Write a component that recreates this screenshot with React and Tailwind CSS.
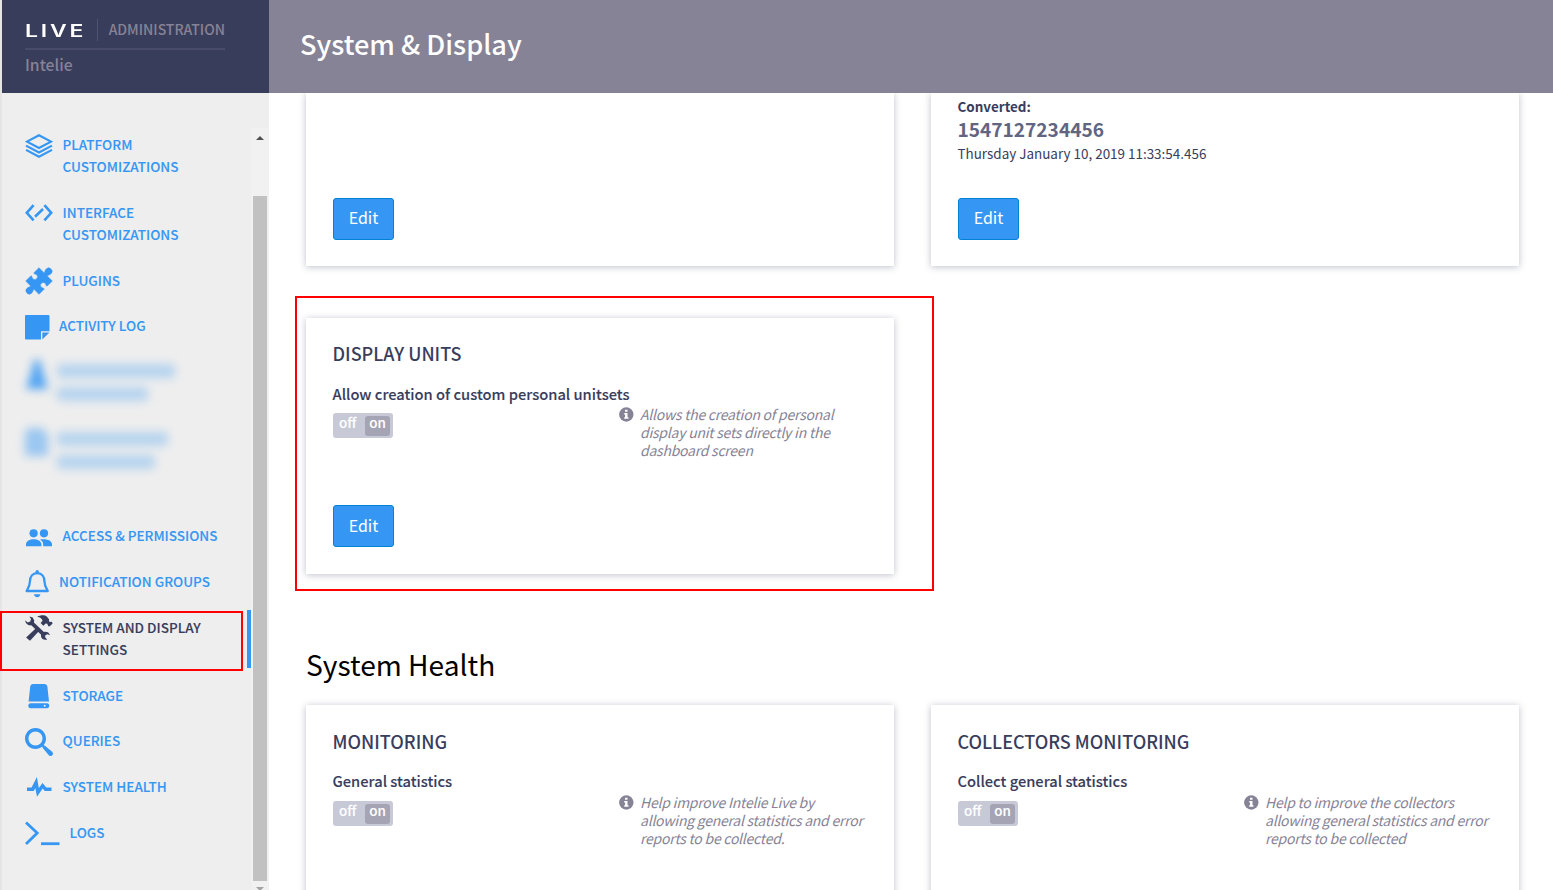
import { ImSearch } from "react-icons/im";

function LayersIcon() {
  return (
    <svg width="28" height="24" viewBox="0 0 28 24" fill="none" stroke="currentColor" strokeWidth="2.2">
      <path d="M14 1.200 26 7.600 14 14 2 7.600Z" />
      <path d="M1 11.600 14 18.400 27 11.600" />
      <path d="M1 15.900 14 22.700 27 15.900" />
    </svg>
  );
}

function CodeIcon() {
  return (
    <svg width="28" height="18" viewBox="0 0 28 18" fill="none" stroke="currentColor" strokeWidth="2.6">
      <path d="M8.600 1.200 1.800 8.800 8.600 16.400M19.400 1.200 26.200 8.800 19.400 16.400M18 5 10 12.800" />
    </svg>
  );
}

function PuzzleIcon() {
  return (
    <svg width="28" height="28" viewBox="0 0 28 28" fill="currentColor">
      <g transform="translate(14 14) rotate(45)">
        <path d="M-9.400-9.400H-2.400C-1.900-10.400-3.400-11.600-3.400-13.600A3.400 3.400 0 0 1 3.400-13.600C3.400-11.600 1.900-10.400 2.400-9.400H9.400V-1.900C8.600-1.300 7.500-2.700 6-2.700A2.700 2.700 0 0 0 6 2.700C7.500 2.700 8.600 1.300 9.400 1.900V9.400H2.400C1.900 10.400 3.400 11.600 3.400 13.600A3.400 3.400 0 0 1-3.400 13.600C-3.400 11.600-1.900 10.400-2.400 9.400H-9.400V1.900C-8.600 1.300-7.500 2.700-6 2.700A2.700 2.700 0 0 0-6-2.700C-7.500-2.700-8.600-1.300-9.400-1.900Z" stroke="currentColor" strokeWidth=".5" />
      </g>
    </svg>
  );
}

function NoteIcon() {
  return (
    <svg width="25" height="25" viewBox="0 0 25 25" fill="currentColor">
      <path d="M1 0H23.500A1 1 0 0 1 24.500 1V16.200H16V24.500H1A1 1 0 0 1 0 23.500V1A1 1 0 0 1 1 0ZM17.300 17.600H24.500L17.300 24.500Z" />
    </svg>
  );
}

function PeopleIcon() {
  return (
    <svg width="28" height="18" viewBox="0 0 28 18" fill="currentColor">
      <circle cx="8.600" cy="4.300" r="4.100" />
      <circle cx="19" cy="4.300" r="4.100" />
      <path d="M1 17.200V15.500C1 12 5 10.200 8.700 10.200S16.400 12 16.400 15.500V17.200ZM15 10.600C16 10.300 17.500 10.100 19 10.200C23 10.300 27 12 27 15.500V17.200H18.200V15.500C18.200 13.300 16.800 11.700 15 10.600Z" />
    </svg>
  );
}

function BellIcon() {
  return (
    <svg width="25" height="28" viewBox="0 0 25 28" fill="none" stroke="currentColor" strokeWidth="2.3">
      <path d="M12.200 3.100C7.500 3.100 5.100 6.600 5 11C4.900 16.200 3.500 18 1.600 21H22.800C20.900 18 19.500 16.200 19.400 11C19.300 6.600 16.900 3.100 12.200 3.100Z" strokeLinejoin="round" />
      <path d="M10.500 3V1.700A1.700 1.700 0 0 1 13.900 1.700V3ZM8.900 24.200H15.500C15 26.200 13.800 27.200 12.200 27.200S9.400 26.200 8.900 24.200Z" fill="currentColor" stroke="none" />
    </svg>
  );
}

function ToolsIcon() {
  return (
    <svg width="28" height="26" viewBox="0 0 28 26" fill="currentColor">
      <path d="M12.200 1.800C15.500-.2 19.800-.2 21.800 1.600L24 4.200V6.200L25 6.900 26.800 6.700 27.600 8.500 24.800 11.300 23.200 11.200 22.300 8.800L20.700 8.600L18.300 10.800L15.600 8L17.600 5.700C17 3.500 15 2.200 12.200 1.800Z" />
      <path d="M12.500 11.800 15.200 14.700 5 25.700 1.100 22.600Z" />
      <path d="M4.400 1.400 7.700 2.400 9.200 5.600 8.900 7.600 18.900 17C21.500 16.300 24.200 17.400 24.900 20.200L22.400 19.300 20.400 20.300 20.100 22.300 22.200 24.500C19.300 25.400 16.400 24 16 21.500L16.100 19.800 6.300 10.300C3.300 10.800.5 9 .1 5.200L2.700 7.400 5.300 6.500 6 4Z" />
    </svg>
  );
}

function StorageIcon() {
  return (
    <svg width="22" height="25" viewBox="0 0 22 25" fill="currentColor">
      <path d="M5.200 0H16.200C18 0 19.200 1.100 19.400 2.700L21 17.600H.6L2.200 2.700C2.400 1.100 3.500 0 5.200 0Z" />
      <path fillRule="evenodd" d="M2.500 19.200H19C22 19.200 22 24.200 19 24.200H2.500C-.4 24.200-.4 19.200 2.500 19.200ZM16.700 20.700A1 1 0 1 0 16.700 22.700A1 1 0 1 0 16.700 20.700Z" />
    </svg>
  );
}

function PulseIcon() {
  return (
    <svg width="26" height="20" viewBox="0 0 26 20" fill="currentColor">
      <path d="M0 10.500H4.600L9.900 0L11.800 11L15.500 6L19.300 10.500H24.500V13.900H17.800L15.700 11.600L10 19.800L8.300 11L6.800 13.900H0Z" />
    </svg>
  );
}

function PromptIcon() {
  return (
    <svg width="35" height="25" viewBox="0 0 35 25" fill="none" stroke="currentColor">
      <path d="M1 1.500 12.200 12 1 23" strokeWidth="2.800" />
      <path d="M16 22.700H34.500" strokeWidth="2.800" />
    </svg>
  );
}

function InfoIcon() {
  return (
    <svg width="15" height="15" viewBox="0 0 15 15">
      <circle cx="7.300" cy="7.500" r="7.200" fill="#868396" />
      <path d="M6 2.700H8.500V4.800H6ZM5.200 6H8.500V10.200H9.500V11.700H5.200V10.200H6.100V7.500H5.200Z" fill="#fff" />
    </svg>
  );
}

function NavItem({ icon, iconPad, height, textPad, active, children }) {
  return (
    <a className={`flex shrink-0 items-start ${height} ${active ? "text-[#393d5c]" : "text-[#3597f3]"}`}>
      <span className={`flex shrink-0 ${textPad || "w-[37.6px]"} ${iconPad}`}>{icon}</span>
      <span className="-mt-px text-[13.5px] leading-[22px] font-medium whitespace-nowrap [-webkit-text-stroke:0.1px]">{children}</span>
    </a>
  );
}

function BlurredItem({ icon, height, first, second }) {
  return (
    <div className={`flex shrink-0 items-start gap-[8px] ${height}`} aria-hidden="true">
      <div className="w-6 blur-[5px]">{icon}</div>
      <div className="flex flex-col gap-[9px] pt-1 blur-[5px]">
        <div className={`h-[14px] rounded-sm bg-[#3597f3]/30 ${first}`} />
        <div className={`h-[14px] rounded-sm bg-[#3597f3]/30 ${second}`} />
      </div>
    </div>
  );
}

function Sidebar() {
  return (
    <aside className="flex h-full w-[269px] shrink-0 flex-col border-l-2 border-[#e5e5e5] bg-[#eeeeee]">
      <div className="h-[93px] shrink-0 bg-[#393d5c] pt-[19px] pl-[23px] text-[#868396]">
        <div className="flex h-[31px] w-[200px] items-start border-b-2 border-[#484b69]">
          <div className="flex h-[22px] w-[73px] items-center border-r border-[#50536f] pt-[2px]">
            <span className="origin-left scale-x-[1.35] font-['Inter'] text-[17px] leading-none font-semibold tracking-[2.1px] text-white">LIVE</span>
          </div>
          <span className="pl-[11px] text-[14px] leading-[21px] font-medium">ADMINISTRATION</span>
        </div>
        <div className="pt-1 text-[15.7px] leading-[22px] font-medium">Intelie</div>
      </div>
      <div className="flex min-h-0 grow pt-[35px]">
        <nav className="relative flex w-[249px] shrink-0 flex-col overflow-hidden pt-[6px] pl-[23px]">
          <NavItem icon={<LayersIcon />} iconPad="" height="h-[68px]">PLATFORM<br />CUSTOMIZATIONS</NavItem>
          <NavItem icon={<CodeIcon />} iconPad="pt-[2px]" height="h-[68px]">INTERFACE<br />CUSTOMIZATIONS</NavItem>
          <NavItem icon={<PuzzleIcon />} iconPad="-mt-[3px]" height="h-[45px]">PLUGINS</NavItem>
          <NavItem icon={<NoteIcon />} iconPad="" textPad="w-[34px]" height="h-[45px]">ACTIVITY LOG</NavItem>
          <BlurredItem
            height="h-[68px]"
            first="w-[118px]"
            second="w-[91px]"
            icon={<svg width="24" height="30" viewBox="0 0 24 30"><path d="M9 0H15L17 10 23 29H1L7 10Z" fill="#3597f3" opacity=".85" /></svg>}
          />
          <BlurredItem
            height="h-[97px]"
            first="w-[111px]"
            second="w-[98px]"
            icon={<svg width="24" height="30" viewBox="0 0 24 30"><path d="M3 0H17L23 7V28H0V4Z" fill="#3597f3" opacity=".45" /></svg>}
          />
          <NavItem icon={<PeopleIcon />} iconPad="pt-[4px]" height="h-[46px]">ACCESS &amp; PERMISSIONS</NavItem>
          <NavItem icon={<BellIcon />} iconPad="-mt-px" textPad="w-[34px]" height="h-[46px]">NOTIFICATION GROUPS</NavItem>
          <NavItem icon={<ToolsIcon />} iconPad="-mt-[2px]" height="h-[68px]" active>SYSTEM AND DISPLAY<br />SETTINGS</NavItem>
          <NavItem icon={<StorageIcon />} iconPad="-mt-px pl-[3px]" height="h-[45px]">STORAGE</NavItem>
          <NavItem icon={<ImSearch size={28} />} iconPad="-mt-[2px]" height="h-[46px]">QUERIES</NavItem>
          <NavItem icon={<PulseIcon />} iconPad="pt-[1px] pl-[2px]" height="h-[46px]">SYSTEM HEALTH</NavItem>
          <NavItem icon={<PromptIcon />} iconPad="-mt-px" textPad="w-[44.6px]" height="h-[46px]">LOGS</NavItem>
          <div className="absolute top-[482px] right-0 h-[58px] w-1 bg-[#3597f3]" />
        </nav>
        <div className="flex w-[18px] shrink-0 flex-col items-center bg-[#f1f1f1] pt-2">
          <div className="h-0 w-0 border-x-4 border-b-4 border-x-transparent border-b-[#505050]" />
          <div className="mt-14 h-[685px] w-[14px] shrink-0 bg-[#c1c1c1]" />
          <div className="mt-[6px] h-0 w-0 border-x-4 border-t-4 border-x-transparent border-t-[#a3a3a3]" />
        </div>
      </div>
    </aside>
  );
}

function Card({ className, children }) {
  return <section className={`w-[588px] shrink-0 bg-white px-[27px] shadow-[0_1px_7px_rgba(57,61,92,0.32)] ${className}`}>{children}</section>;
}

function EditButton({ raised }) {
  return (
    <button className={`flex h-[42px] w-[61px] items-center justify-center rounded-[3px] border border-[#0082d5] bg-[#3597f3] text-[16px] leading-none text-white ${raised ? "pb-[5px]" : "pb-[3px]"}`}>
      Edit
    </button>
  );
}

function Toggle() {
  return (
    <div className="mt-2 flex h-[25px] w-[60px] items-start justify-between rounded-[3px] bg-[#c8c9d6] px-[3px] pt-[3px] text-[13.45px] font-medium text-white [-webkit-text-stroke:0.1px]">
      <span className="-mt-[3px] pl-[3px] leading-[18px]">off</span>
      <span className="flex h-5 w-[25px] items-start justify-center rounded-[3px] bg-[#a5a4b4]">
        <span className="-mt-[3px] leading-[18px]">on</span>
      </span>
    </div>
  );
}

function Setting({ title, label, lines, lowered }) {
  return (
    <div className={`text-[#393d5c] ${lowered ? "pt-6" : "pt-[23px]"}`}>
      <h3 className="-ml-[0.5px] text-[18px] leading-6 font-medium">{title}</h3>
      <div className={`-ml-[0.5px] text-[14.7px] leading-[22px] font-medium [-webkit-text-stroke:0.1px] ${lowered ? "mt-[17px] mb-px" : "mt-[18px]"}`}>{label}</div>
      <div className="flex h-[100px]">
        <div className="w-[286px] shrink-0"><Toggle /></div>
        <div className="mt-[2px] w-[21px] shrink-0"><InfoIcon /></div>
        <p className="text-[14px] leading-[18px] tracking-[-0.24px] whitespace-nowrap text-[#868396] italic">
          {lines.map((line) => <span key={line} className="block">{line}</span>)}
        </p>
      </div>
    </div>
  );
}

export default function App() {
  return (
    <div className="relative flex h-[890px] w-[1553px] overflow-hidden bg-white font-['Noto_Sans_CJK_SC',sans-serif]">
      <Sidebar />
      <main className="flex min-w-0 grow flex-col">
        <header className="flex h-[93px] shrink-0 items-center bg-[#868396] pb-[5px] pl-[31px]">
          <h1 className="text-[27.15px] leading-10 font-medium text-white">System &amp; Display</h1>
        </header>
        <div className="min-h-0 grow overflow-hidden pl-[37px]">
          <div className="flex gap-[37px]">
            <Card className="h-[173px] pt-[105px]"><EditButton raised /></Card>
            <Card className="h-[173px] text-[#393d5c]">
              <div className="-ml-[0.5px] pt-[3px] text-[13.45px] leading-5 font-bold">Converted:</div>
              <div className="-ml-[0.5px] text-[19.1px] leading-[27px] font-bold text-[#616582]">1547127234456</div>
              <div className="-ml-[0.5px] h-[55px] text-[13.45px] leading-5">Thursday January 10, 2019 11:33:54.456</div>
              <EditButton raised />
            </Card>
          </div>
          <div className="relative mt-[52px] w-[588px]">
            <Card className="h-64">
              <Setting
                title="DISPLAY UNITS"
                label="Allow creation of custom personal unitsets"
                lines={["Allows the creation of personal", "display unit sets directly in the", "dashboard screen"]}
              />
              <EditButton />
            </Card>
            <div className="absolute -top-[22px] -left-[11px] h-[295px] w-[639px] border-2 border-[#ff0000]" />
          </div>
          <h2 className="mt-[69px] h-[62px] text-[28.15px] leading-[42px] text-black">System Health</h2>
          <div className="flex gap-[37px]">
            <Card className="h-64">
              <Setting
                lowered
                title="MONITORING"
                label="General statistics"
                lines={["Help improve Intelie Live by", "allowing general statistics and error", "reports to be collected."]}
              />
            </Card>
            <Card className="h-64">
              <Setting
                lowered
                title="COLLECTORS MONITORING"
                label="Collect general statistics"
                lines={["Help to improve the collectors", "allowing general statistics and error", "reports to be collected"]}
              />
            </Card>
          </div>
        </div>
      </main>
      <div className="absolute top-[611px] left-0 h-[60px] w-[243px] border-2 border-[#ff0000]" />
    </div>
  );
}
